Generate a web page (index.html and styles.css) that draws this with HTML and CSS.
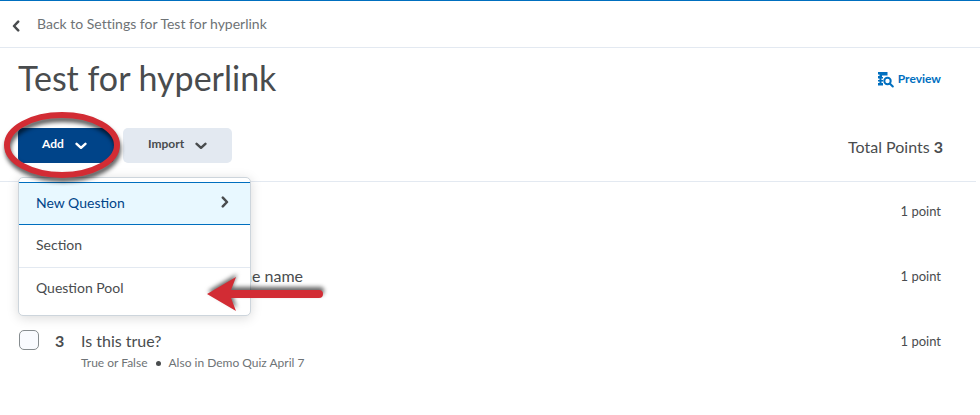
FILE: index.html
```html
<!DOCTYPE html>
<html lang="en">
<head>
  <meta charset="UTF-8" />
  <title>Test for hyperlink</title>
  <link rel="stylesheet" href="styles.css">
</head>
<body>

<nav class="back-bar">
  <a class="back-link" href="#">
    <svg width="8" height="12" viewBox="0 0 8 12"><path d="M6.2 1.6 2 6l4.2 4.4" /></svg>
    <span>Back to Settings for Test for hyperlink</span>
  </a>
</nav>

<header class="page-header">
  <h1>Test for hyperlink</h1>
  <a class="preview" href="#">
    <svg width="16" height="16" viewBox="0 0 16 16">
      <path class="fill" d="M0 0h9.500v3.500H4V5h1v1.500H3.500V8H5v1.500H3.500V11H5v2.500H0V11h1.500V9.500H0V8h1.500V6.500H0V4h1.500V2.500H0Z" />
      <circle cx="9.500" cy="9" r="3.200" />
      <path d="m12 11.700 2.800 2.800" />
    </svg>
    <span>Preview</span>
  </a>
</header>

<div class="toolbar">
  <div class="add-wrap">
    <button class="btn btn-primary" type="button">Add
      <svg width="12" height="8" viewBox="0 0 12 8"><path d="M1.600 1.800 6 5.800l4.400-4" /></svg>
    </button>

    <!-- Open Add menu -->
    <div class="menu">
      <button class="menu-item active" type="button">New Question
        <svg width="8" height="12" viewBox="0 0 8 12"><path d="M1.800 1.600 6 6l-4.200 4.400" /></svg>
      </button>
      <button class="menu-item" type="button">Section</button>
      <button class="menu-item" type="button">Question Pool</button>
    </div>

    <!-- Red callouts -->
    <svg class="ring" width="124" height="80" viewBox="0 0 124 80">
      <ellipse cx="60" cy="36" rx="55" ry="30" />
    </svg>
    <svg class="arrow" width="128" height="48" viewBox="0 0 128 48">
      <path d="M3 22 32 5l-5 13h88a4 4 0 0 1 0 8H27l5 13Z" />
    </svg>
  </div>
  <button class="btn" type="button">Import
    <svg width="12" height="8" viewBox="0 0 12 8"><path d="M1.600 1.800 6 5.800l4.400-4" /></svg>
  </button>
  <div class="total">Total Points <b>3</b></div>
</div>

<main class="questions">
  <div class="question">
    <div class="points">1 point</div>
  </div>
  <div class="question">
    <div class="text covered">he name</div>
    <div class="points">1 point</div>
  </div>
  <div class="question">
    <input class="check" type="checkbox" id="q3" />
    <div class="number">3</div>
    <div class="text">
      <label for="q3">Is this true?</label>
      <div class="meta"><span>True or False</span><span class="dot"></span><span>Also in Demo Quiz April 7</span></div>
    </div>
    <div class="points">1 point</div>
  </div>
</main>

</body>
</html>
```
FILE: styles.css
```css
* {
  box-sizing: border-box;
}
body {
  margin: 0;
  background: white;
  border-top: 1px solid #006fbf;
  color: #494c4e;
  font-family: Lato, sans-serif;
  font-size: 16px;
  font-variant-ligatures: none;
}
a {
  text-decoration: none;
}
svg {
  fill: none;
  stroke: currentColor;
  stroke-width: 2.5;
  stroke-linecap: round;
  stroke-linejoin: round;
  flex: none;
}
.back-bar {
  height: 47px;
  padding: 0 12px;
  border-bottom: 1px solid #e3e9f1;
}
.back-link {
  display: inline-flex;
  align-items: center;
  gap: 17px;
  height: 45px;
  color: #6e7376;
  font-size: 14px;
}
.back-link svg {
  margin-top: 5px;
  color: #494c4e;
}
.page-header {
  display: flex;
  align-items: center;
  justify-content: space-between;
  height: 63px;
  padding: 0 39px 3px 18px;
}
h1 {
  margin: 0;
  font-size: 34px;
  line-height: 48px;
  font-weight: 400;
}
.preview {
  display: flex;
  align-items: center;
  gap: 4px;
  color: #006fbf;
  font-size: 12px;
  font-weight: 700;
}
.preview svg {
  margin-top: 4px;
  stroke-width: 2;
}
.preview .fill {
  fill: currentColor;
  stroke: none;
}
.toolbar {
  display: flex;
  align-items: center;
  gap: 9px;
  height: 71px;
  padding: 0 33px 2px 18px;
  margin-right: 4px;
  border-bottom: 1px solid #e3e9f1;
}
.add-wrap {
  position: relative;
}
.btn {
  display: flex;
  align-items: center;
  justify-content: space-between;
  width: 109px;
  height: 35px;
  padding: 0 25px 4px;
  border: 0;
  border-radius: 5px;
  background: #e3e9f1;
  color: #494c4e;
  font-family: inherit;
  font-size: 12px;
  font-weight: 700;
}
.btn svg {
  margin-top: 6px;
}
.btn-primary {
  width: 96px;
  padding: 0 27px 4px 24px;
  background: #004489;
  color: white;
}
.total {
  margin-left: auto;
  padding-top: 2px;
}
.menu {
  position: absolute;
  top: 49px;
  left: 0;
  z-index: 1;
  width: 233px;
  padding: 4px 0 5px;
  background: white;
  border: 1px solid #cdd5dc;
  border-radius: 5px;
  box-shadow: 0 2px 12px rgba(0,0,0,0.15);
}
.menu-item {
  display: flex;
  align-items: center;
  justify-content: space-between;
  width: 100%;
  height: 42px;
  padding: 0 21px 2px 17px;
  border: 0;
  background: white;
  color: #494c4e;
  font-family: inherit;
  font-size: 14px;
}
.menu-item + .menu-item + .menu-item {
  height: 43px;
  border-top: 1px solid #e3e9f1;
}
.menu-item.active {
  height: 43px;
  background: #e8f8ff;
  border-top: 1px solid #006fbf;
  border-bottom: 1px solid #006fbf;
  color: #004489;
}
.menu-item svg {
  color: #494c4e;
}
.ring,
.arrow {
  position: absolute;
  z-index: 2;
  overflow: visible;
  pointer-events: none;
}
.ring {
  top: -19px;
  left: -16px;
  stroke: #d22c34;
  stroke-width: 6;
  filter: drop-shadow(1px 4px 2px rgba(0,0,0,0.65));
}
.arrow {
  top: 144px;
  left: 186px;
  fill: #d22c34;
  stroke: none;
  filter: drop-shadow(1px -3px 2px rgba(0,0,0,0.6));
}
.questions {
  padding: 18px 39px 0 19px;
}
.question {
  display: flex;
  align-items: flex-start;
  min-height: 65px;
  line-height: 22px;
}
.check {
  appearance: none;
  width: 20px;
  height: 20px;
  margin: 0;
  border: 1px solid #868c8f;
  border-radius: 5px;
  background: #f9fbff;
}
.number {
  width: 42px;
  padding-left: 16px;
  font-weight: 700;
}
.covered {
  width: 284px;
  text-align: right;
}
.meta {
  display: flex;
  align-items: center;
  gap: 8px;
  color: #6e7376;
  font-size: 12px;
}
.dot {
  width: 5px;
  height: 5px;
  border-radius: 50%;
  background: #494c4e;
}
.points {
  margin-left: auto;
  font-size: 13px;
}
```
